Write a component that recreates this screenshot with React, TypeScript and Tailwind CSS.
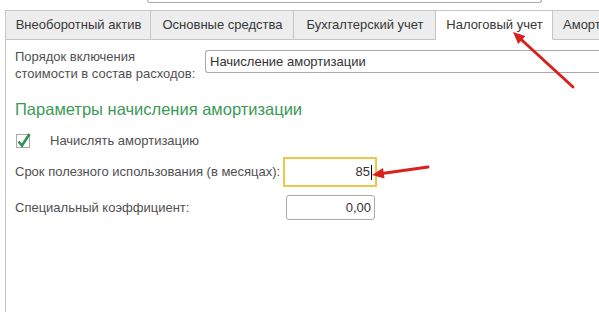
import React from "react";

interface Tab {
  title: string;
  width: string;
  active?: boolean;
}

const tabs: Tab[] = [
  { title: "Внеоборотный актив", width: "w-[146px]" },
  { title: "Основные средства", width: "w-[143px]" },
  { title: "Бухгалтерский учет", width: "w-[142px]" },
  { title: "Налоговый учет", width: "w-[117px]", active: true },
  { title: "Амортизация", width: "w-[100px]" },
];

const Arrow: React.FC<{ x1: number; y1: number; x2: number; y2: number }> = ({ x1, y1, x2, y2 }) => {
  const a = Math.atan2(y2 - y1, x2 - x1);
  const len = 13;
  const spread = 0.42;
  const p1 = [x2 - len * Math.cos(a - spread), y2 - len * Math.sin(a - spread)];
  const p2 = [x2 - len * Math.cos(a + spread), y2 - len * Math.sin(a + spread)];
  const bx = x2 - (len - 3) * Math.cos(a);
  const by = y2 - (len - 3) * Math.sin(a);
  return (
    <g>
      <line x1={x1} y1={y1} x2={bx} y2={by} stroke="#d8221b" strokeWidth={3} strokeLinecap="round" />
      <polygon points={`${x2},${y2} ${p1[0]},${p1[1]} ${p2[0]},${p2[1]}`} fill="#d8221b" />
    </g>
  );
};

export default function App() {
  return (
    <div className="relative w-[599px] h-[312px] overflow-hidden bg-white font-['Liberation_Sans',Arial,sans-serif] text-[13px] text-[#505050] flex flex-col">
      {/* bottom edge of the field above */}
      <div className="ml-[147px] w-[395px] h-[3px] border-x border-b border-[#a9a9a9] rounded-b-[3px]" />

      {/* tabs */}
      <div className="mt-[7px] flex pl-[5px] h-[30px] shrink-0">
        {tabs.map((tab, i) => (
          <div
            key={i}
            className={
              "shrink-0 flex items-center justify-center whitespace-nowrap border-t border-r text-[#383838] border-[#c6c6c6] " +
              (i === 0 ? "border-l " : "") +
              (tab.active ? "bg-white border-b border-b-white " : "bg-[#ededed] border-b ") +
              tab.width
            }
          >
            <span className="pl-[1px]">{tab.title}</span>
          </div>
        ))}
      </div>

      {/* panel */}
      <div className="ml-[5px] flex-1 border-l border-[#c6c6c6] pl-[9px]">
        <div className="mt-[8px] flex">
          <div className="w-[190px] leading-[17px]">
            Порядок включения
            <br />
            стоимости в состав расходов:
          </div>
          <div className="mt-[2px] h-[23px] flex-1 border border-r-0 border-[#a9a9a9] rounded-l-[3px] flex items-center pl-[4px] text-[#333] whitespace-nowrap">
            Начисление амортизации
          </div>
        </div>

        <div className="mt-[17px] text-[16.5px] leading-[20px] text-[#3a9a55]">
          Параметры начисления амортизации
        </div>

        <div className="mt-[15px] flex items-center h-[14px]">
          <div className="ml-[1px] w-[14px] h-[14px] border border-[#a8a8a8] bg-white relative">
            <svg className="absolute -left-[1px] -top-[4px]" width="16" height="18" viewBox="0 0 16 18">
              <path d="M2.5 10.5 L6 14.5 L13.5 3" fill="none" stroke="#2e9150" strokeWidth="2.6" />
            </svg>
          </div>
          <span className="ml-[20px]">Начислять амортизацию</span>
        </div>

        <div className="mt-[9px] flex items-center">
          <div className="w-[268px] whitespace-nowrap">Срок полезного использования (в месяцах):</div>
          <div className="w-[94px] h-[30px] border-2 border-[#e9c84a] flex items-center justify-end pr-[3px] text-[#333]">
            85
            <span className="ml-[1px] w-[1px] h-[15px] bg-black" />
          </div>
        </div>

        <div className="mt-[8px] flex items-center">
          <div className="w-[271px] whitespace-nowrap">Специальный коэффициент:</div>
          <div className="w-[89px] h-[25px] border border-[#a9a9a9] rounded-[3px] flex items-center justify-end pr-[3px] text-[#333]">
            0,00
          </div>
        </div>
      </div>

      {/* annotation arrows */}
      <svg className="absolute inset-0 pointer-events-none" width="599" height="312">
        <Arrow x1={573} y1={87} x2={513} y2={32} />
        <Arrow x1={428} y1={167} x2={372} y2={175} />
      </svg>
    </div>
  );
}
